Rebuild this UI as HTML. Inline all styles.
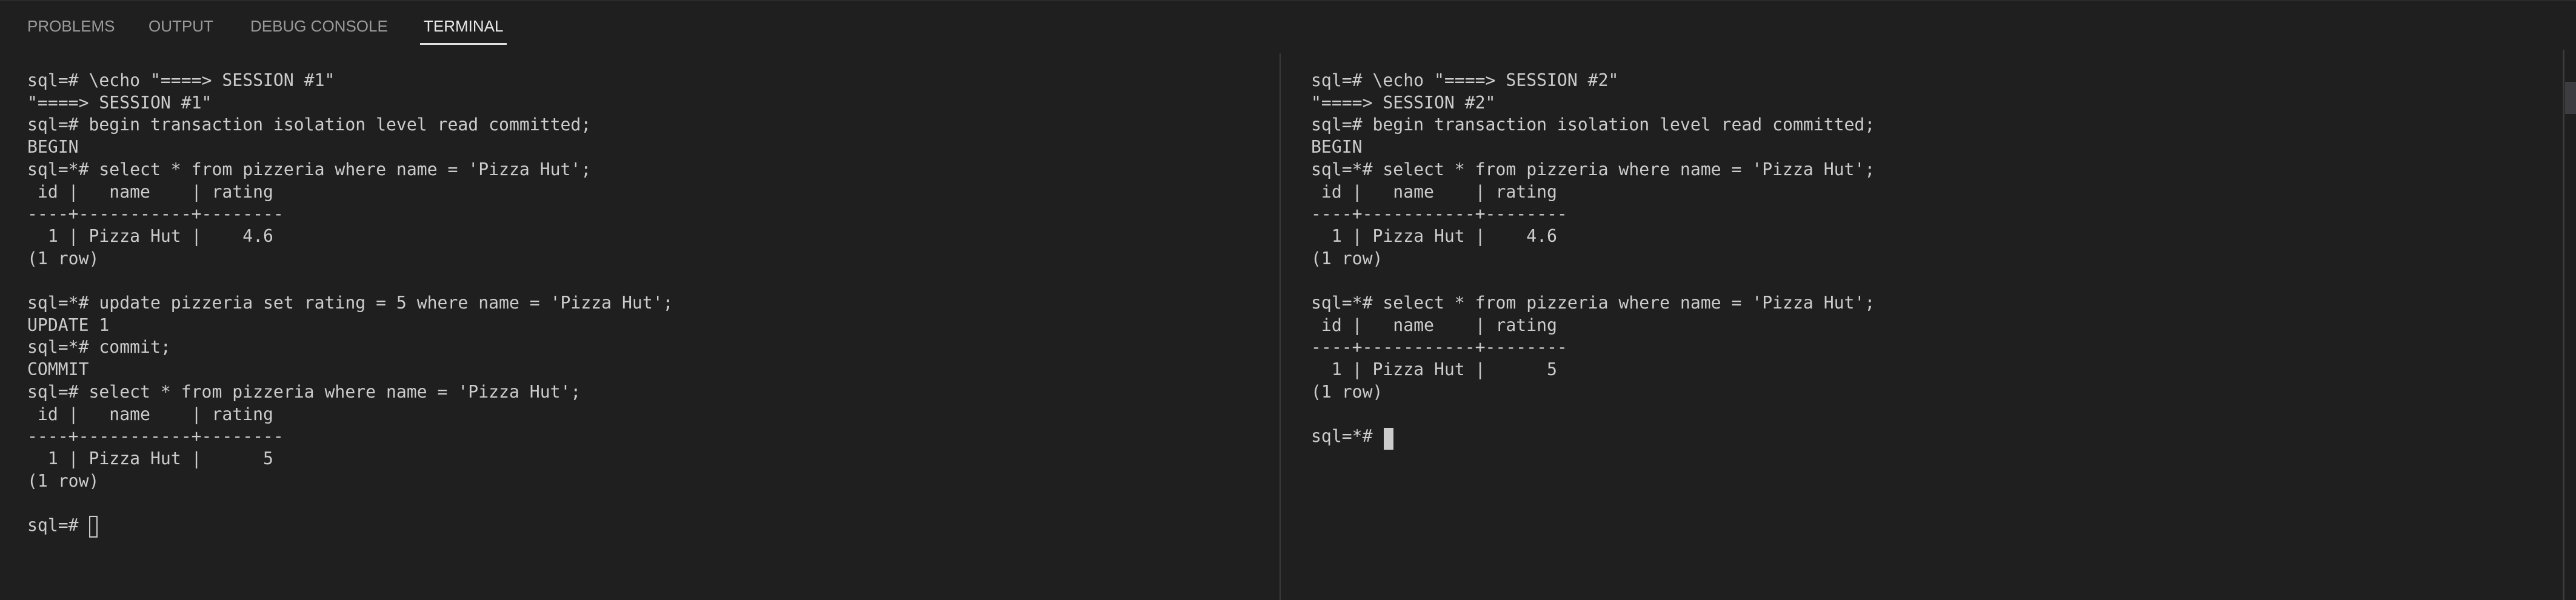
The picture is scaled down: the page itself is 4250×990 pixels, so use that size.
<!DOCTYPE html>
<html><head><meta charset="utf-8"><style>
html,body{margin:0;padding:0;width:4250px;height:990px;background:#1f1f1f;overflow:hidden;position:relative}
.top{position:absolute;left:0;top:0;width:4250px;height:2px;background:#2b2b2b}
.tab{position:absolute;top:28px;font-family:"Liberation Sans",sans-serif;font-size:26px;color:#9a9a9a}
.act{color:#e8e8e8}
.ul{position:absolute;left:693px;top:71px;width:143px;height:3px;background:#e0e0e0}
pre{position:absolute;margin:0;font-family:"DejaVu Sans Mono",monospace;font-size:28.1px;line-height:36.7px;color:#cccccc;white-space:pre}
.div{position:absolute;left:2111px;top:88px;width:2px;height:902px;background:#3a3a3a}
.sb{position:absolute;left:4228px;top:82px;width:3px;height:908px;background:#3a3a3a}
.th{position:absolute;left:4232px;top:135px;width:18px;height:53px;background:#3c3c41}
.cur1{position:absolute;left:147px;top:851px;width:14px;height:36px;border:2px solid #cccccc;box-sizing:border-box}
.cur2{position:absolute;left:2283px;top:706px;width:16px;height:36px;background:#cccccc}
</style></head><body>
<div class="top"></div>
<div class="tab" style="left:45px">PROBLEMS</div>
<div class="tab" style="left:245px">OUTPUT</div>
<div class="tab" style="left:413px">DEBUG CONSOLE</div>
<div class="tab act" style="left:699px">TERMINAL</div>
<div class="ul"></div>
<pre style="left:45px;top:115px">sql=# \echo "====> SESSION #1"
"====> SESSION #1"
sql=# begin transaction isolation level read committed;
BEGIN
sql=*# select * from pizzeria where name = 'Pizza Hut';
 id |   name    | rating
----+-----------+--------
  1 | Pizza Hut |    4.6
(1 row)

sql=*# update pizzeria set rating = 5 where name = 'Pizza Hut';
UPDATE 1
sql=*# commit;
COMMIT
sql=# select * from pizzeria where name = 'Pizza Hut';
 id |   name    | rating
----+-----------+--------
  1 | Pizza Hut |      5
(1 row)

sql=# </pre>
<div class="cur1"></div>
<div class="div"></div>
<pre style="left:2163px;top:115px">sql=# \echo "====> SESSION #2"
"====> SESSION #2"
sql=# begin transaction isolation level read committed;
BEGIN
sql=*# select * from pizzeria where name = 'Pizza Hut';
 id |   name    | rating
----+-----------+--------
  1 | Pizza Hut |    4.6
(1 row)

sql=*# select * from pizzeria where name = 'Pizza Hut';
 id |   name    | rating
----+-----------+--------
  1 | Pizza Hut |      5
(1 row)

sql=*# </pre>
<div class="cur2"></div>
<div class="sb"></div>
<div class="th"></div>
</body></html>
